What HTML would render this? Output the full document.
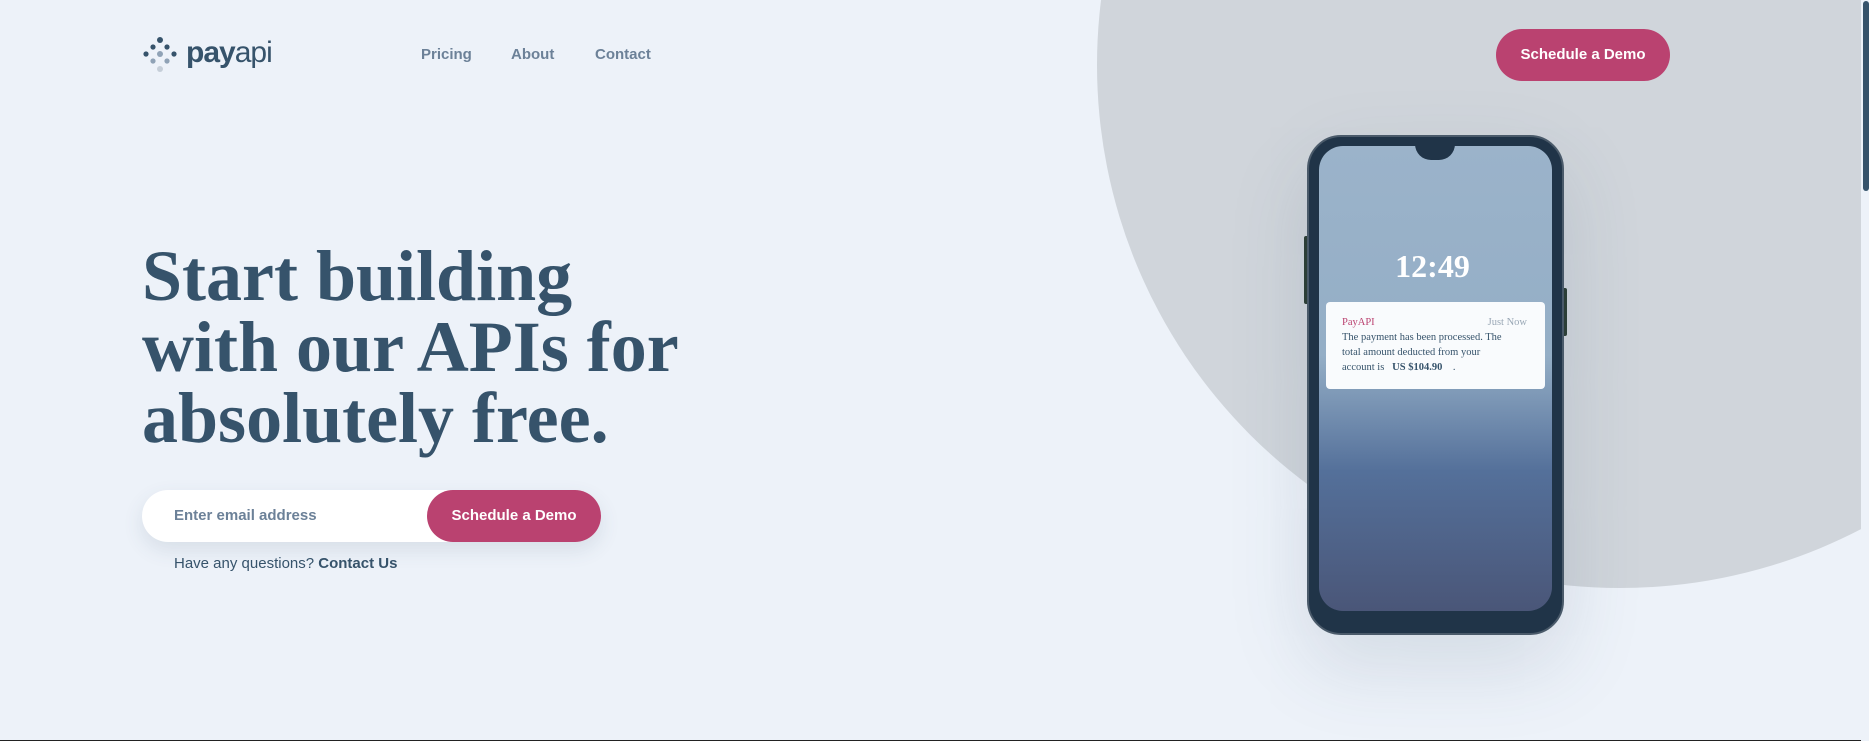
<!DOCTYPE html>
<html><head><meta charset="utf-8"><style>
*{margin:0;padding:0;box-sizing:border-box}
html,body{width:1869px;height:741px;overflow:hidden;background:#edf2f9;font-family:"Liberation Sans",sans-serif}
.circle{position:absolute;left:1097px;top:-458px;width:1046px;height:1046px;border-radius:50%;background:#d0d5db}
.clip{position:absolute;left:0;top:0;width:1861px;height:741px;overflow:hidden}
.sb{position:absolute;left:1862px;top:0;width:7px;height:741px;background:#edf2f9}
.sbt{position:absolute;left:1863px;top:1px;width:6px;height:190px;border-radius:3px;background:#36536b}
.line{position:absolute;left:0;top:740px;width:1861px;height:1px;background:#222}
.nav{position:absolute;top:46px;font-size:15px;font-weight:bold;color:#6c8198}
.btn{position:absolute;background:#ba4270;color:#fff;border-radius:26px;font-weight:bold;font-size:15px;text-align:center}
h1{position:absolute;left:142px;top:241px;font-family:"Liberation Serif",serif;font-weight:bold;font-size:72px;line-height:71px;color:#36536b;letter-spacing:0}
.inp{position:absolute;left:142px;top:490px;width:459px;height:52px;border-radius:26px;background:#fff;box-shadow:0 8px 20px rgba(54,83,107,.12)}
.phone{position:absolute;left:1307px;top:135px;width:257px;height:500px;border-radius:34px;background:#203448;box-shadow:0 30px 80px rgba(54,83,107,.15);border:2px solid #4a5a6a}
.screen{position:absolute;left:10px;top:9px;right:10px;bottom:22px;border-radius:24px;background:linear-gradient(#9bb3ca 0%,#94aec6 45%,#54709a 70%,#4a5678 100%)}
.notch{position:absolute;left:96px;top:-2px;width:40px;height:16px;background:#203448;border-radius:0 0 20px 20px}
.noti{position:absolute;left:7px;top:156px;right:7px;height:87px;background:#f9fbfd;border-radius:4px;font-family:"Liberation Serif",serif;font-size:10.5px;color:#36536b;padding:13px 38px 13px 16px;line-height:15px}
</style></head><body>
<div class="clip"><div class="circle"></div></div>
<div class="sb"></div><div class="sbt"></div><div class="line"></div>
<svg style="position:absolute;left:143px;top:37px" width="40" height="36">
<circle cx="17" cy="3" r="3" fill="#36536b"/><circle cx="10" cy="10" r="2.6" fill="#36536b"/><circle cx="24" cy="10" r="2.6" fill="#36536b"/>
<circle cx="3" cy="17" r="2.6" fill="#36536b"/><circle cx="17" cy="17" r="3" fill="#8fa2b6"/><circle cx="31" cy="17" r="2.6" fill="#36536b"/>
<circle cx="10" cy="24" r="2.6" fill="#8fa2b6"/><circle cx="24" cy="24" r="2.6" fill="#8fa2b6"/><circle cx="17" cy="32" r="3" fill="#c5ced8"/></svg>
<div style="position:absolute;left:186px;top:36px;font-size:30px;color:#36536b;letter-spacing:-1px"><b>pay</b><span style="font-weight:300">api</span></div>
<div class="nav" style="left:421px">Pricing</div>
<div class="nav" style="left:511px">About</div>
<div class="nav" style="left:595px">Contact</div>
<div class="btn" style="left:1496px;top:29px;width:174px;height:52px;line-height:52px">Schedule a Demo</div>
<h1>Start building<br>with our APIs for<br>absolutely free.</h1>
<div class="inp"><span style="position:absolute;left:32px;top:17px;font-size:15px;font-weight:bold;color:#6c8198">Enter email address</span></div>
<div class="btn" style="left:427px;top:490px;width:174px;height:52px;line-height:52px">Schedule a Demo</div>
<div style="position:absolute;left:174px;top:555px;font-size:15px;color:#36536b">Have any questions? <b>Contact Us</b></div>
<div style="position:absolute;left:1304px;top:236px;width:5px;height:68px;background:#2c3e34;border-radius:2px"></div>
<div style="position:absolute;left:1562px;top:288px;width:5px;height:48px;background:#2c3e34;border-radius:2px"></div>
<div class="phone"><div class="screen"><div class="notch"></div>
<div style="position:absolute;left:0;right:6px;top:102px;text-align:center;font-family:'Liberation Serif',serif;font-weight:bold;font-size:32px;color:#fff">12:49</div>
<div class="noti"><span style="color:#ba4270">PayAPI</span><span style="position:absolute;right:18px;top:13px;color:#9aa8b6">Just Now</span><br>The payment has been processed. The total amount deducted from your account is &nbsp; <b>US&nbsp;$104.90</b> &nbsp;&nbsp; .</div>
</div></div>
</body></html>
